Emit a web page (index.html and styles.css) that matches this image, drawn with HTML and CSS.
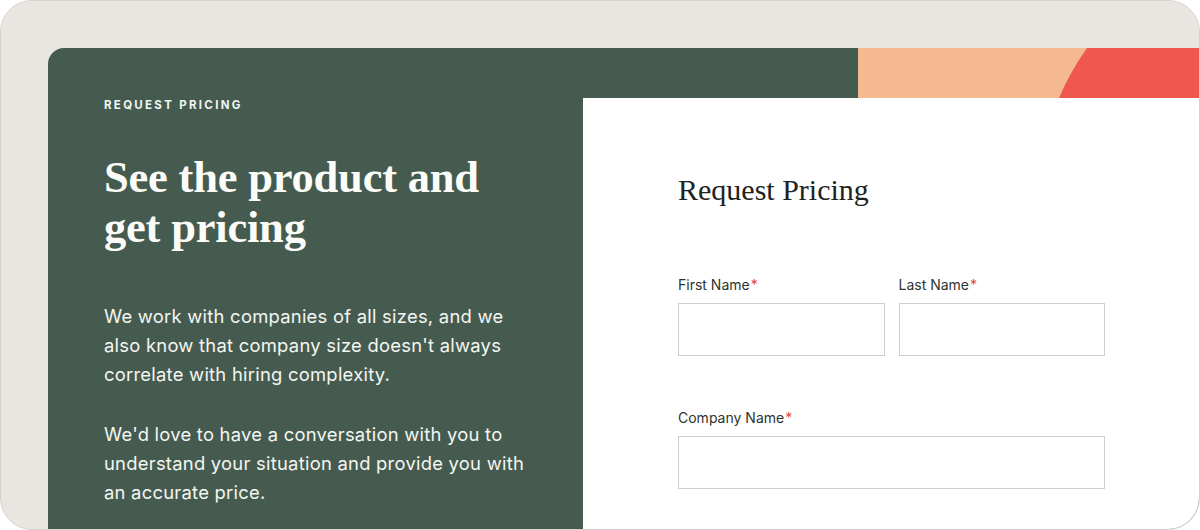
FILE: index.html
```html
<!DOCTYPE html>
<html lang="en">
<head>
<meta charset="utf-8">
<title>Request Pricing</title>
<link rel="stylesheet" href="styles.css">
</head>
<body>
<div class="frame">
  <div class="panel">
    <section class="intro">
      <p class="eyebrow">REQUEST PRICING</p>
      <h1 class="headline">See the product and<br>get pricing</h1>
      <p class="copy">We work with companies of all sizes, and we<br>also know that company size doesn't always<br>correlate with hiring complexity.</p>
      <p class="copy">We'd love to have a conversation with you to<br>understand your situation and provide you with<br>an accurate price.</p>
    </section>
    <section class="side">
      <div class="deco">
        <div class="deco-gap"></div>
        <div class="deco-shape">
          <svg width="100%" height="50" viewBox="0 0 341 50" preserveAspectRatio="none" aria-hidden="true">
            <rect width="341" height="50" fill="#F4B990"/>
            <path d="M229 0 Q212 24 201 50 L341 50 L341 0 Z" fill="#EF584E"/>
          </svg>
        </div>
      </div>
      <form class="card">
        <h2 class="card-title">Request Pricing</h2>
        <div class="row">
          <label class="field">
            <span class="label">First Name<span class="req">*</span></span>
            <input class="input" type="text">
          </label>
          <label class="field">
            <span class="label">Last Name<span class="req">*</span></span>
            <input class="input" type="text">
          </label>
        </div>
        <div class="row single">
          <label class="field">
            <span class="label">Company Name<span class="req">*</span></span>
            <input class="input" type="text">
          </label>
        </div>
      </form>
    </section>
  </div>
</div>
</body>
</html>
```

FILE: styles.css
```css
* { box-sizing: border-box; }
html, body { margin: 0; padding: 0; }
body {
  width: 1200px;
  height: 530px;
  overflow: hidden;
  background: #ffffff;
  font-family: "Inter", "Lato", sans-serif;
}
.frame {
  width: 1200px;
  height: 530px;
  border: 1px solid #d6d3ce;
  border-radius: 32px;
  background: #e9e6e1;
  overflow: hidden;
  padding: 47px 0 0 47px;
  display: flex;
}
.panel {
  flex: 1;
  min-width: 0;
  display: grid;
  grid-template-columns: 535px minmax(0, 1fr);
  background: #465b50;
  border-top-left-radius: 16px;
}
.intro {
  padding: 49px 0 0 56px;
  color: #f3f6f1;
}
.eyebrow {
  margin: 0;
  font-size: 11.5px;
  line-height: 16px;
  font-weight: 700;
  letter-spacing: 2.3px;
  color: #f0f6f3;
}
.headline {
  margin: 39px 0 0;
  font-family: "Liberation Serif", "Times New Roman", serif;
  font-weight: 700;
  font-size: 44.5px;
  line-height: 50px;
  letter-spacing: -0.2px;
  color: #fbfbf8;
}
.copy {
  margin: 50px 0 0;
  white-space: nowrap;
  font-size: 18.4px;
  line-height: 29px;
  letter-spacing: 0.25px;
  color: #f3f6f1;
}
.copy + .copy { margin-top: 31px; }
.side {
  display: flex;
  flex-direction: column;
  min-width: 0;
}
.deco {
  height: 50px;
  display: flex;
}
.deco-gap { width: 275px; flex: none; }
.deco-shape { flex: 1; min-width: 0; }
.deco-shape svg { display: block; }
.card {
  flex: 1;
  background: #ffffff;
  padding: 74px 94px 0 95px;
  margin: 0;
}
.card-title {
  margin: 0;
  font-family: "Liberation Serif", "Times New Roman", serif;
  font-weight: 400;
  font-size: 30px;
  line-height: 36px;
  color: #1f2320;
}
.row {
  display: flex;
  gap: 14px;
  margin-top: 67px;
}
.row.single { margin-top: 52px; }
.field {
  flex: 1 1 0;
  min-width: 0;
  display: flex;
  flex-direction: column;
  gap: 8px;
}
.label {
  font-size: 14px;
  line-height: 20px;
  color: #2f3330;
}
.req { color: #e0483e; margin-left: 1px; }
.input {
  width: 100%;
  min-width: 0;
  height: 53px;
  border: 1px solid #cfcfcf;
  border-radius: 0;
  background: #fff;
  font: inherit;
  outline: none;
}
```
